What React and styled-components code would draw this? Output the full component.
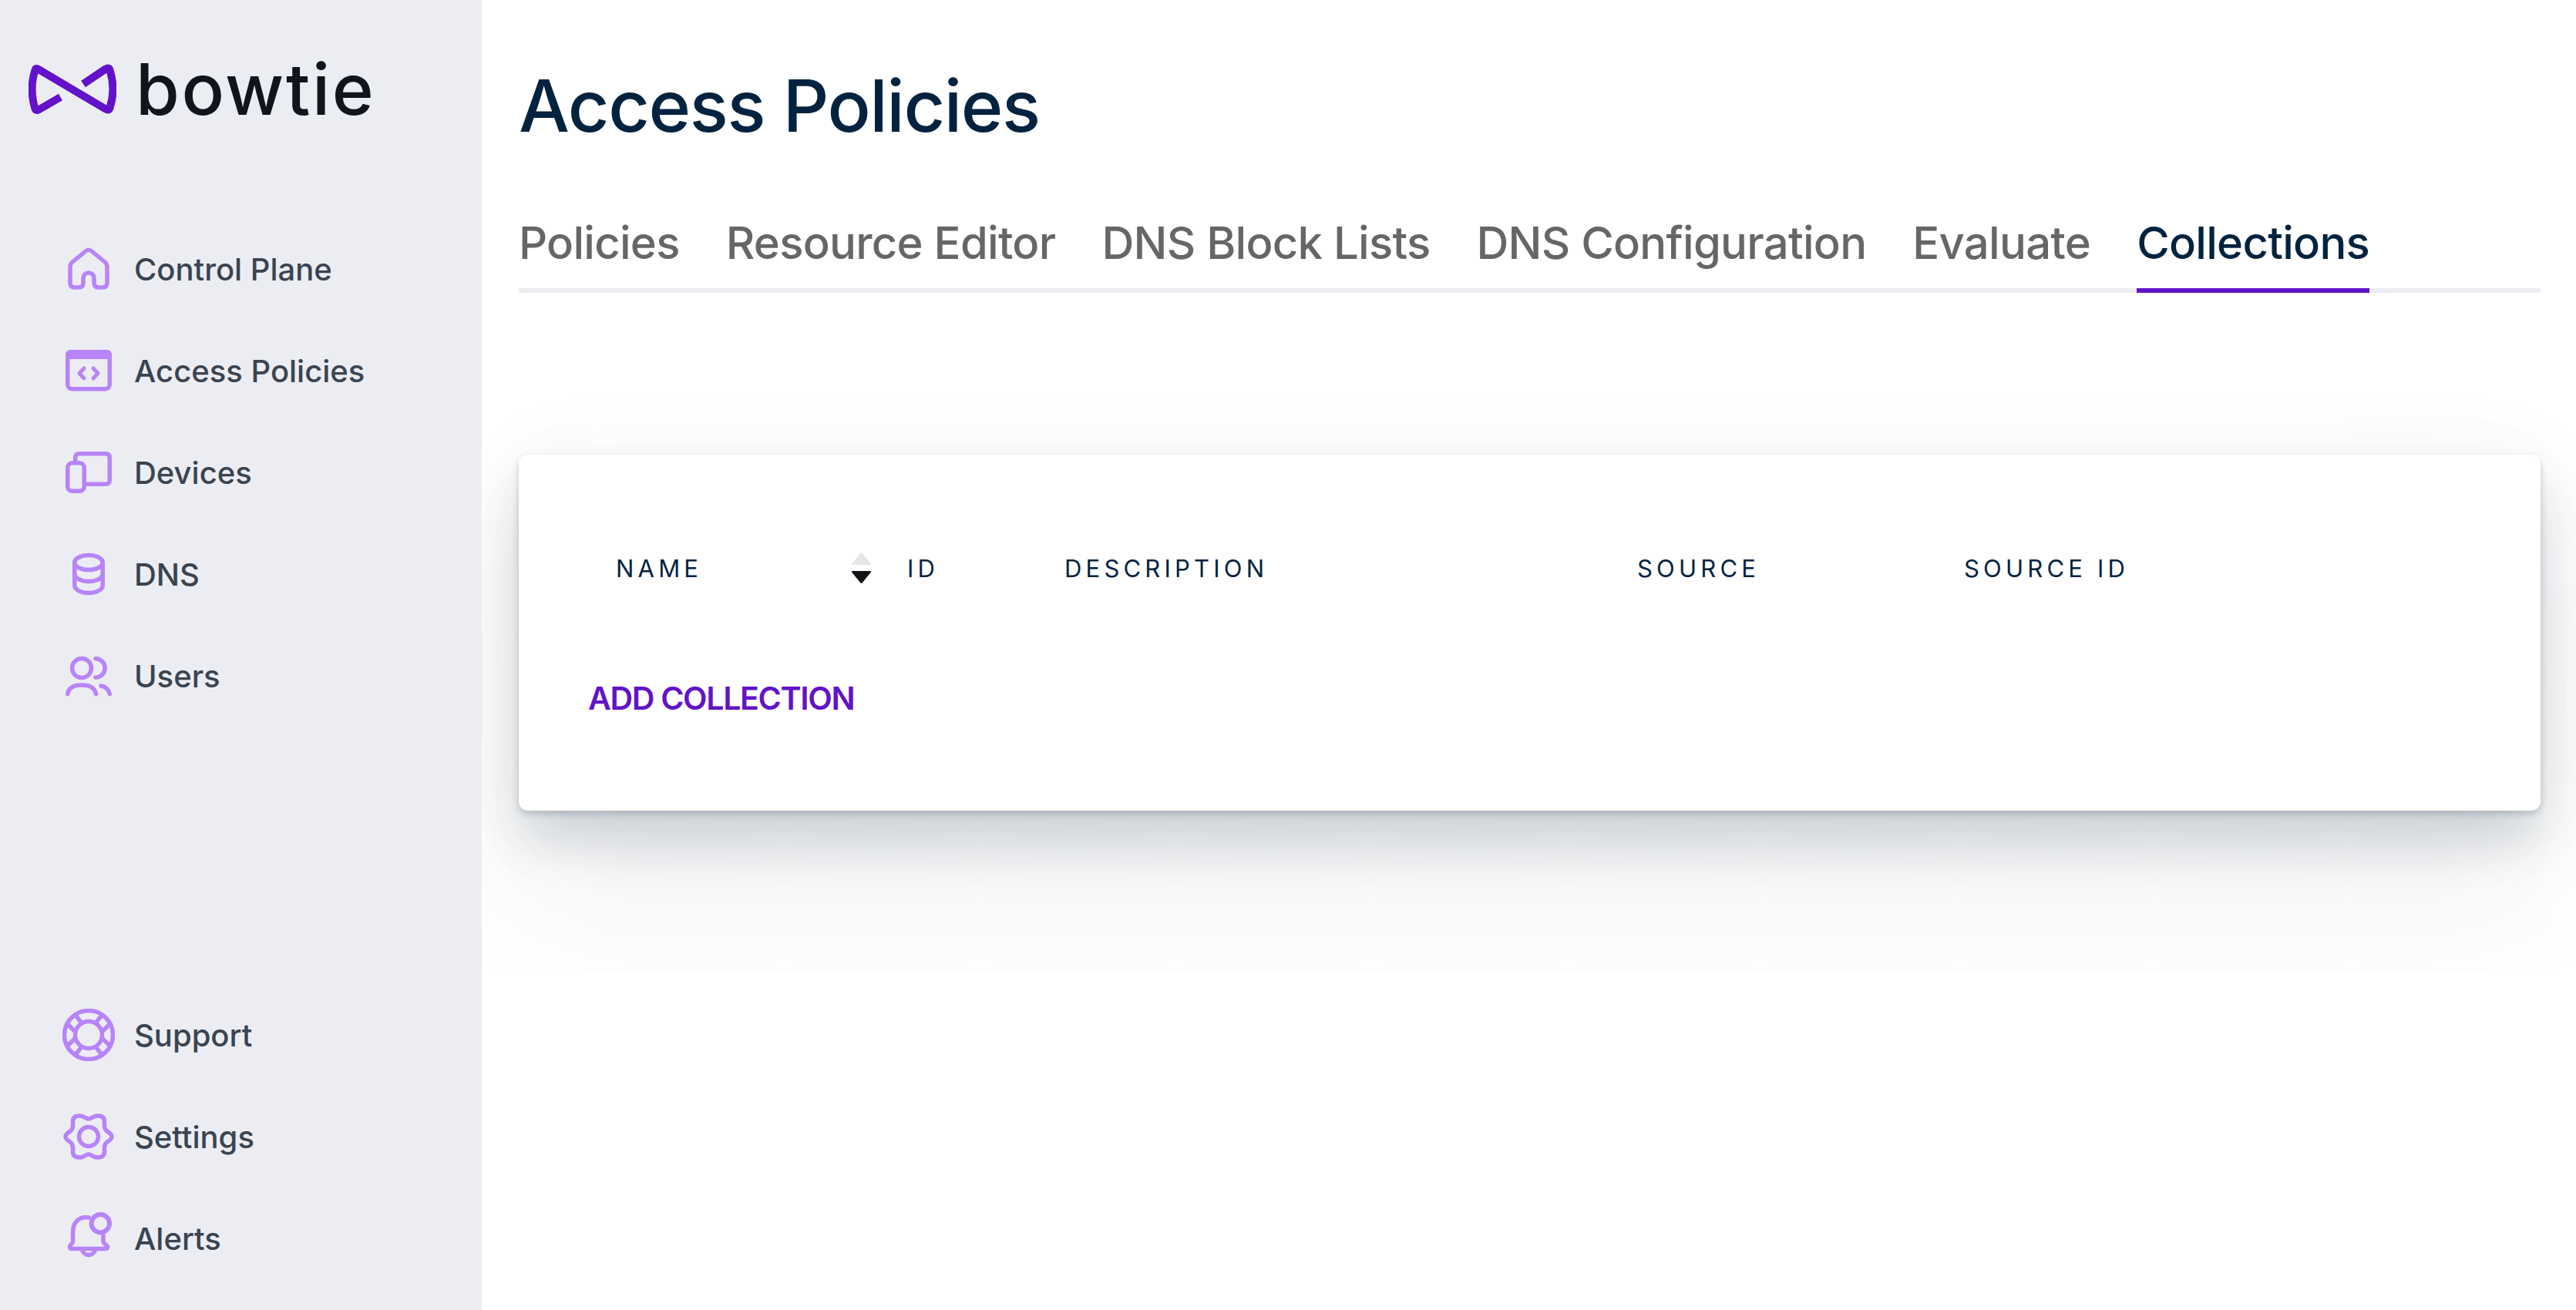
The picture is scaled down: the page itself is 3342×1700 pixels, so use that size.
import React from 'react';
import styled, { createGlobalStyle } from 'styled-components';

const GlobalStyle = createGlobalStyle`
  html, body {
    margin: 0;
    padding: 0;
    background: #fff;
  }

  body {
    font-family: Inter, "Liberation Sans", sans-serif;
    overflow: hidden;
  }
`;

const Page = styled.div`
  display: flex;
  width: 3342px;
  height: 1700px;
`;

const Sidebar = styled.aside`
  display: flex;
  flex-direction: column;
  flex: none;
  box-sizing: border-box;
  width: 625px;
  height: 1700px;
  padding-bottom: 59px;
  background: #ecedf3;
`;

const LogoRow = styled.div`
  display: flex;
  align-items: center;
  gap: 25px;
  margin-bottom: 167px;
  padding: 83px 0 0 37px;
`;

const LogoText = styled.span`
  font-size: 92px;
  line-height: 65px;
  font-weight: 500;
  letter-spacing: 2.6px;
  color: #10141b;
`;

const NavList = styled.nav`
  display: flex;
  flex-direction: column;
  gap: 64px;
  margin-top: ${({ $bottom }) => ($bottom ? 'auto' : '0')};
`;

const NavItem = styled.a`
  display: flex;
  align-items: center;
  gap: 25px;
  height: 68px;
  padding-left: 81px;
  font-size: 40px;
  font-weight: 500;
  letter-spacing: 0;
  color: #3a4450;
`;

const Icon = styled.svg.attrs({
  viewBox: '0 0 68 68',
  fill: 'none',
  stroke: '#b784f9',
  strokeWidth: 5.5,
  strokeLinecap: 'round',
  strokeLinejoin: 'round',
})`
  flex: none;
  width: 68px;
  height: 68px;
`;

const Main = styled.main`
  flex: 1;
  min-width: 0;
  padding: 81px 46px 0 48px;
`;

const Title = styled.h1`
  margin: 0 0 87px;
  font-size: 93px;
  line-height: 112px;
  font-weight: 500;
  letter-spacing: -1.35px;
  color: #01233f;
`;

const TabBar = styled.div`
  display: flex;
  gap: 60px;
  border-bottom: 6px solid #ecedf3;
`;

const Tab = styled.a`
  margin-bottom: -6px;
  padding-bottom: 24px;
  border-bottom: 6px solid ${({ $active }) => ($active ? '#6213c9' : 'transparent')};
  font-size: 58px;
  line-height: 70px;
  font-weight: 500;
  letter-spacing: -0.72px;
  color: ${({ $active }) => ($active ? '#01233f' : '#666666')};
`;

// the panel below the tabs clips the card shadow at its bottom edge
const TabPanel = styled.section`
  box-sizing: border-box;
  height: 882px;
  margin: 0 -46px 0 -48px;
  padding: 210px 46px 0 48px;
  overflow: hidden;
`;

const Card = styled.div`
  box-sizing: border-box;
  height: 462px;
  padding: 127px 90px 0;
  border-radius: 12px;
  background: #fff;
  box-shadow:
    0 4px 10px rgba(1, 35, 63, 0.2),
    0 40px 60px rgba(1, 35, 63, 0.1),
    0 50px 80px rgba(1, 35, 63, 0.04),
    0 100px 200px rgba(1, 35, 63, 0.075),
    0 0 120px rgba(1, 35, 63, 0.04);
`;

const TableHead = styled.div`
  display: grid;
  grid-template-columns: 378px 204px 743px 424px 1fr;
  margin-left: 36px;
`;

const HeadCell = styled.div`
  display: flex;
  align-items: center;
  justify-content: space-between;
  height: 40px;
  padding-right: ${({ $sorted }) => ($sorted ? '47px' : '0')};
  font-size: 31px;
  font-weight: 400;
  letter-spacing: 5.2px;
  color: #01233f;
`;

const SortArrows = styled.svg.attrs({ viewBox: '0 0 25 40', strokeLinejoin: 'round', strokeWidth: 2 })`
  flex: none;
  width: 25px;
  height: 40px;
`;

const AddButton = styled.a`
  display: block;
  margin-top: 124px;
  font-size: 41px;
  line-height: 50px;
  font-weight: 600;
  letter-spacing: -1.3px;
  color: #6213c9;
`;

const BowtieMark = () => (
  <svg width="114" height="65" viewBox="0 0 114 65" fill="none" stroke="#6213c9" strokeWidth="10" strokeLinejoin="round">
    <path d="M41.5 43 L13 59.5 Q9.5 61 8.5 58 C3 40 3 25 8.5 8 Q9.5 4.5 13 7 L100 58.5 Q104.5 61 105.5 57 C111 40 111 25 105.5 8 Q104.5 4 100 6.5 L71 26" />
  </svg>
);

const HomeIcon = () => (
  <Icon>
    <path d="M30 11 Q34 7.5 38 11 L55 25 Q58 27.5 58 31 V52 Q58 58 52 58 H47 Q41 58 41 52 V46 A7 7 0 0 0 27 46 V52 Q27 58 21 58 H16 Q10 58 10 52 V31 Q10 27.5 13 25 Z" />
  </Icon>
);

const PolicyIcon = () => (
  <Icon>
    <rect x="6.75" y="10.25" width="54.5" height="47.5" rx="6" />
    <path d="M4 13 A6 6 0 0 1 10 7 H58 A6 6 0 0 1 64 13 V19 H4 Z" fill="#b784f9" stroke="none" />
    <path d="M28 31 L22 37.5 L28 44 M40 31 L46 37.5 L40 44" strokeWidth="5" />
  </Icon>
);

const DevicesIcon = () => (
  <Icon>
    <path d="M16.75 19 V15 Q16.75 9.75 22 9.75 H56 Q61.25 9.75 61.25 15 V44 Q61.25 49.25 56 49.25 H31" />
    <rect x="6.75" y="21.75" width="21.5" height="36.5" rx="6" />
  </Icon>
);

const DnsIcon = () => (
  <Icon>
    <ellipse cx="34" cy="19" rx="18.25" ry="9.5" />
    <path d="M15.75 19 V49 C15.75 54 24 58.5 34 58.5 S52.25 54 52.25 49 V19" />
    <path d="M15.75 34 C15.75 39 24 43.5 34 43.5 S52.25 39 52.25 34" />
  </Icon>
);

const UsersIcon = () => (
  <Icon>
    <circle cx="25" cy="24" r="12.5" />
    <path d="M43 11.75 A12 12 0 0 1 43 36" />
    <path d="M6.75 57.5 C8 50 14 46 25 46 C36 46 42 50 43.5 57.5" />
    <path d="M50 47 C56 48 60 52 61.25 57.5" />
  </Icon>
);

const SupportIcon = () => (
  <Icon strokeWidth="4.5">
    <circle cx="34" cy="34" r="31.5" />
    <circle cx="34" cy="34" r="17.5" />
    <path d="M17.3 9 L24 17.3 M6.7 20 L15.7 29 M50.7 9 L44 17.3 M61.3 20 L52.3 29 M17.3 59 L24 50.7 M6.7 48 L15.7 39 M50.7 59 L44 50.7 M61.3 48 L52.3 39" strokeLinecap="butt" />
  </Icon>
);

const SettingsIcon = () => (
  <Icon>
    <path d="M34 11 C38 11 40 7 45 7 C50.5 7 54.5 9 54.5 14 C54.5 18 53.5 21 56 25 C58 28 64 29.5 64 34 C64 38.5 58 40 56 43 C53.5 47 54.5 50 54.5 54 C54.5 59 50.5 61 45 61 C40 61 38 57 34 57 C30 57 28 61 23 61 C17.5 61 13.5 59 13.5 54 C13.5 50 14.5 47 12 43 C10 40 4 38.5 4 34 C4 29.5 10 28 12 25 C14.5 21 13.5 18 13.5 14 C13.5 9 17.5 7 23 7 C28 7 30 11 34 11 Z" />
    <circle cx="34" cy="34" r="12.5" />
  </Icon>
);

const AlertsIcon = () => (
  <Icon>
    <circle cx="49.3" cy="14.7" r="11.7" strokeWidth="6" />
    <path d="M34 7 C21 5 13.5 14 13.5 26 V38 C13.5 41 9.5 43 9.5 45 C9.5 47 10.5 47.5 12 47.5 H56 C57.5 47.5 58.5 47 58.5 45 C58.5 43 53 41 53 38 V30" />
    <path d="M25 48 A9.5 11 0 0 0 43 48" />
  </Icon>
);

const topLinks = [
  { label: 'Control Plane', icon: HomeIcon },
  { label: 'Access Policies', icon: PolicyIcon },
  { label: 'Devices', icon: DevicesIcon },
  { label: 'DNS', icon: DnsIcon },
  { label: 'Users', icon: UsersIcon },
];

const bottomLinks = [
  { label: 'Support', icon: SupportIcon },
  { label: 'Settings', icon: SettingsIcon },
  { label: 'Alerts', icon: AlertsIcon },
];

const tabs = ['Policies', 'Resource Editor', 'DNS Block Lists', 'DNS Configuration', 'Evaluate', 'Collections'];

const App = () => (
  <Page>
    <GlobalStyle />
    <Sidebar>
      <LogoRow>
        <BowtieMark />
        <LogoText>bowtie</LogoText>
      </LogoRow>
      <NavList>
        {topLinks.map(({ label, icon: LinkIcon }) => (
          <NavItem key={label}>
            <LinkIcon />
            {label}
          </NavItem>
        ))}
      </NavList>
      <NavList $bottom>
        {bottomLinks.map(({ label, icon: LinkIcon }) => (
          <NavItem key={label}>
            <LinkIcon />
            {label}
          </NavItem>
        ))}
      </NavList>
    </Sidebar>
    <Main>
      <Title>Access Policies</Title>
      <TabBar>
        {tabs.map((tab) => (
          <Tab key={tab} $active={tab === 'Collections'}>
            {tab}
          </Tab>
        ))}
      </TabBar>
      <TabPanel>
        <Card>
          <TableHead>
            <HeadCell $sorted>
              NAME
              <SortArrows>
                <path d="M12.5 1 L24 15 H1 Z" fill="#e6e6e6" stroke="#e6e6e6" />
                <path d="M1 25 H24 L12.5 39 Z" fill="#111318" stroke="#111318" />
              </SortArrows>
            </HeadCell>
            <HeadCell>ID</HeadCell>
            <HeadCell>DESCRIPTION</HeadCell>
            <HeadCell>SOURCE</HeadCell>
            <HeadCell>SOURCE ID</HeadCell>
          </TableHead>
          <AddButton>ADD COLLECTION</AddButton>
        </Card>
      </TabPanel>
    </Main>
  </Page>
);

export default App;
